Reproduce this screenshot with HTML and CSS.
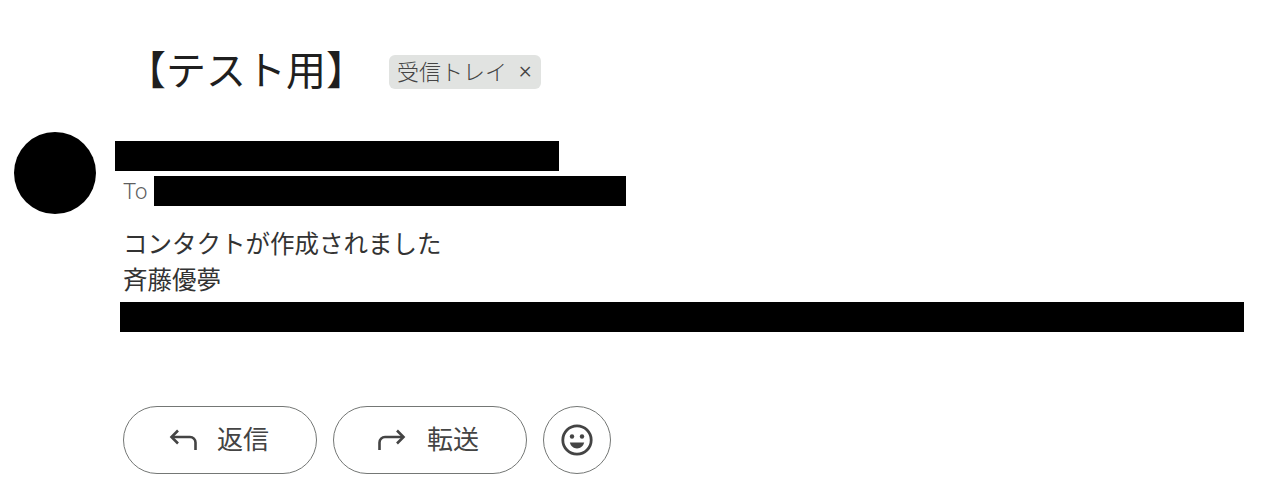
FILE: index.html
```html
<!DOCTYPE html>
<html lang="ja">
<head>
  <meta charset="UTF-8">
  <title>【テスト用】</title>
  <link rel="stylesheet" href="styles.css">
</head>
<body>
  <div class="subject">
    <h1>【テスト用】</h1>
    <span class="chip">受信トレイ<span class="chip-x">×</span></span>
  </div>

  <div class="message">
    <div class="avatar"></div>
    <div class="head">
      <div class="redact name"></div>
      <div class="to">
        <span>To</span>
        <div class="redact addr"></div>
      </div>
    </div>
  </div>

  <div class="body">
    <p>コンタクトが作成されました</p>
    <p>斉藤優夢</p>
    <div class="redact line"></div>
  </div>

  <div class="actions">
    <button class="btn reply">
      <svg width="32" height="32" viewBox="0 0 32 32" fill="none" stroke="#444" stroke-width="2.6"><path d="M11 6.500l-6.500 6.500 6.500 6.500"/><path d="M5 13h18a5.500 5.500 0 0 1 5.500 5.500V26"/></svg>
      <span class="label">返信</span>
    </button>
    <button class="btn forward">
      <svg width="32" height="32" viewBox="0 0 32 32" fill="none" stroke="#444" stroke-width="2.6"><path d="M21 6.500l6.500 6.500-6.500 6.500"/><path d="M27 13H9a5.500 5.500 0 0 0-5.500 5.500V26"/></svg>
      <span class="label">転送</span>
    </button>
    <button class="btn round">
      <svg width="34" height="34" viewBox="0 0 34 34"><circle cx="17" cy="17" r="14.2" fill="none" stroke="#444" stroke-width="2.8"/><circle cx="12" cy="13.500" r="2.200" fill="#444"/><circle cx="22" cy="13.500" r="2.200" fill="#444"/><path d="M9.800 19.500h14.400c-1 3.800-3.600 5.900-7.200 5.900s-6.200-2.100-7.200-5.900z" fill="#444"/></svg>
    </button>
  </div>
</body>
</html>
```

FILE: styles.css
```css
body {
  margin: 0;
  background: #fff;
  color: #333;
  font-family: Roboto, "Noto Sans CJK JP", sans-serif;
}

.subject {
  display: flex;
  align-items: center;
  height: 68px;
  padding: 38px 0 0 126px;
}

h1 {
  margin: 0;
  font-size: 40px;
  font-weight: 400;
  line-height: 68px;
  color: #1f1f1f;
}

.chip {
  display: flex;
  align-items: center;
  height: 34px;
  margin-left: 23px;
  padding: 0 9px 4px 8px;
  box-sizing: border-box;
  border-radius: 6px;
  background: #e1e3e1;
  color: #444;
  font-size: 22px;
  font-weight: 300;
}

.chip-x {
  margin-left: 12px;
  font-size: 24px;
}

.message {
  display: flex;
  margin-top: 26px;
  padding-left: 14px;
}

.avatar {
  width: 82px;
  height: 82px;
  border-radius: 50%;
  background: #000;
}

.redact {
  background: #000;
}

.head {
  margin: 9px 0 0 19px;
}

.name {
  width: 444px;
  height: 30px;
}

.to {
  display: flex;
  align-items: center;
  gap: 7px;
  margin-top: 5px;
  padding-left: 8px;
  color: #5e5e5e;
  font-size: 22px;
  font-weight: 300;
}

.addr {
  width: 472px;
  height: 30px;
}

.body {
  margin-top: 13px;
  padding-left: 123px;
  font-size: 24.5px;
  font-weight: 400;
  line-height: 36px;
}

.body p {
  margin: 0;
}

.line {
  width: 1124px;
  height: 30px;
  margin: 3px 0 0 -3px;
}

.actions {
  display: flex;
  gap: 16px;
  margin-top: 74px;
  padding-left: 123px;
}

.btn {
  display: flex;
  align-items: center;
  justify-content: center;
  width: 194px;
  height: 68px;
  padding: 0;
  border: 1px solid #747775;
  border-radius: 34px;
  background: #fff;
  color: #444;
  font-family: inherit;
  font-size: 26px;
  font-weight: 400;
}

.label {
  padding-bottom: 6px;
}

.reply {
  gap: 18px;
  padding-right: 4px;
}

.forward {
  gap: 19px;
  padding-right: 5px;
}

.btn.round {
  width: 68px;
}
```
